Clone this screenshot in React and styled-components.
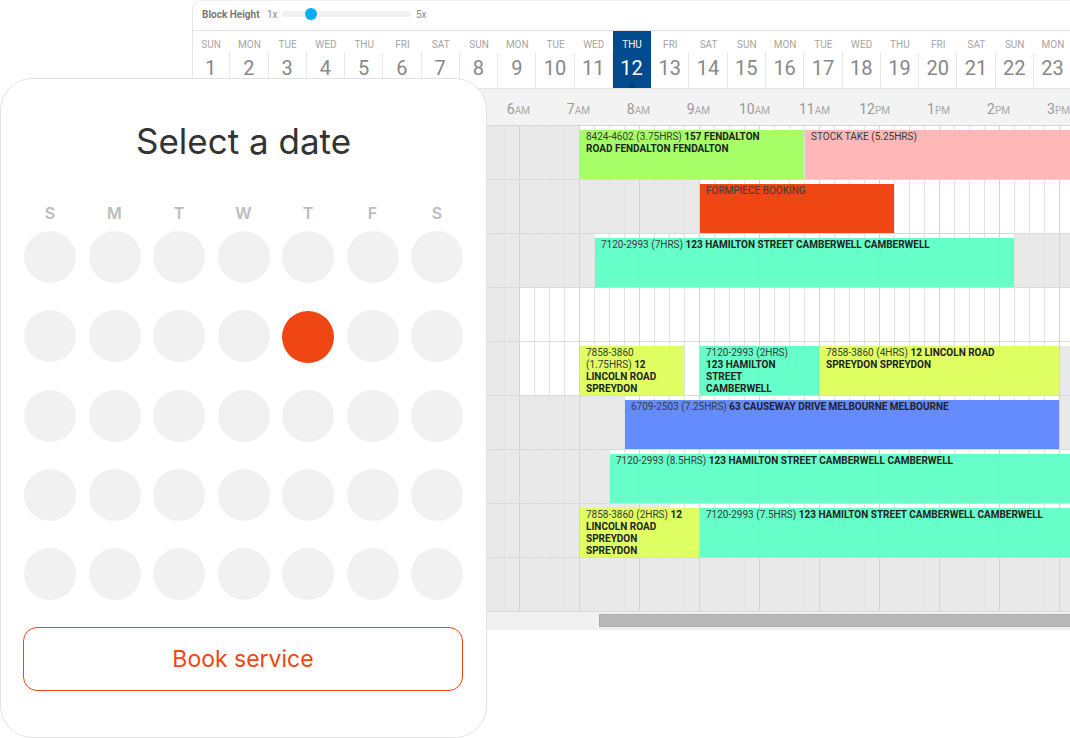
import React from 'react';
import styled, { createGlobalStyle } from 'styled-components';

const Global = createGlobalStyle`
  html, body { margin: 0; padding: 0; background: #fff; }
  body { width: 1070px; height: 738px; overflow: hidden; font-family: "Roboto", "Liberation Sans", sans-serif; }
  * { box-sizing: border-box; }
`;

const Stage = styled.div`
  position: relative;
  width: 1070px;
  height: 738px;
  overflow: hidden;
  padding-left: 192px;
`;

const Scheduler = styled.section`
  width: 900px;
  height: 630px;
  background: #fff;
  border: 2px solid #efefef;
  border-width: 1px 0 2px 1px;
  border-top-left-radius: 9px;
  border-left-color: #e6e6e6;
  overflow: hidden;
`;

const Toolbar = styled.div`
  height: 30px;
  display: flex;
  align-items: center;
  padding: 0 0 3px 9px;
  border-bottom: 1px solid #e4e4e4;
  font-size: 10px;
  color: #8d8784;
`;

const ToolbarLabel = styled.span`
  font-weight: 700;
  color: #7b7673;
  width: 65px;
`;

const Scale = styled.span`
  width: ${p => p.$w}px;
`;

const SliderTrack = styled.div`
  position: relative;
  width: 129px;
  height: 6px;
  margin: 0 5px 0 0;
  border-radius: 3px;
  background: #f1f1f1;
`;

const SliderThumb = styled.div`
  position: absolute;
  left: 23px;
  top: -3px;
  width: 12px;
  height: 12px;
  border-radius: 50%;
  background: #03aef4;
  box-shadow: 1px 1px 0 1px #f3f3f3;
`;

const DayStrip = styled.div`
  display: flex;
  height: 57px;
  margin-left: -1px;
`;

const Day = styled.div`
  position: relative;
  flex: 0 0 38.27px;
  display: flex;
  flex-direction: column;
  align-items: center;
  background: ${p => (p.$active ? '#004b8f' : 'transparent')};
  color: ${p => (p.$active ? '#fff' : '#888')};
`;

const DayName = styled.div`
  height: 21px;
  padding-top: 8px;
  font-size: 10px;
  line-height: 12px;
  color: ${p => (p.$active ? '#fff' : '#a8a4a2')};
`;

const DayNumber = styled.div`
  width: 100%;
  flex: 1;
  padding-top: 4px;
  text-align: center;
  font-size: 20px;
  line-height: 24px;
  border-right: 1px solid ${p => (p.$active ? 'transparent' : '#e8e8e8')};
`;

const Marker = styled.span`
  position: absolute;
  left: 50%;
  bottom: 0;
  margin-left: -4px;
  border: 4px solid transparent;
  border-top: 0;
  border-bottom: 5px solid #003a70;
`;

const TimeStrip = styled.div`
  display: flex;
  height: 38px;
  padding-left: 277px;
  background: #f3f3f3;
  border-top: 1px solid #e4e4e4;
  border-bottom: 1px solid #d6d6d6;
`;

const Hour = styled.div`
  flex: 0 0 60px;
  padding-top: 11px;
  text-align: right;
  font-size: 14px;
  line-height: 18px;
  color: #999;
`;

const Meridiem = styled.span`
  font-size: 10px;
  color: #aaa;
`;

const Row = styled.div`
  position: relative;
  height: 54px;
  overflow: hidden;
  background: #fff;
  border-bottom: 1px solid #dadada;
  &::after {
    content: '';
    position: absolute;
    inset: 0;
    z-index: 1;
    background:
      linear-gradient(90deg, #d4d4d4 1px, transparent 1px) 26px 0 / 60px 100%,
      linear-gradient(90deg, #e3e3e3 1px, transparent 1px) 11px 0 / 15px 100%;
  }
`;

const Closed = styled.div`
  position: absolute;
  top: ${p => (p.$inset ? 4 : 0)}px;
  bottom: 0;
  background: #e9e9e9;
`;

const Booking = styled.div`
  position: absolute;
  z-index: 2;
  top: 4px;
  bottom: 0;
  padding: 1px 17px 0 6px;
  overflow: hidden;
  font-size: 10px;
  line-height: 12px;
  color: #3a3a3a;
  text-transform: uppercase;
  background: ${p => p.$color};
  strong { font-weight: 700; color: #222; }
`;

const ScrollBar = styled.div`
  height: 16px;
  padding: 2px 0 2px 406px;
  background: #f1f1f1;
`;

const ScrollThumb = styled.div`
  height: 13px;
  background: #b9b9b9;
  border: 1px solid #a9a9a9;
`;

const Card = styled.div`
  position: absolute;
  z-index: 5;
  left: 0;
  top: 78px;
  width: 487px;
  height: 660px;
  padding: 0 23px;
  background: #fff;
  border: 1px solid #e3e3e3;
  border-radius: 32px;
  font-family: "Inter", "Liberation Sans", sans-serif;
  display: flex;
  flex-direction: column;
`;

const Title = styled.h1`
  margin: 40px 0 0;
  height: 44px;
  text-align: center;
  font-size: 35px;
  line-height: 44px;
  font-weight: 400;
  color: #333;
`;

const Weekdays = styled.div`
  display: grid;
  grid-template-columns: repeat(7, 52px);
  column-gap: 12.5px;
  margin-top: 40px;
  height: 24px;
`;

const Weekday = styled.div`
  text-align: center;
  font-size: 16px;
  line-height: 20px;
  font-weight: 600;
  color: #bcbcbc;
`;

const Dates = styled.div`
  display: grid;
  grid-template-columns: repeat(7, 52px);
  grid-auto-rows: 52px;
  column-gap: 12.5px;
  row-gap: 27.3px;
  margin-top: 4px;
`;

const Dot = styled.div`
  border-radius: 50%;
  background: ${p => (p.$active ? '#ef4613' : '#f1f1f1')};
  transform: ${p => (p.$active ? 'translateY(1px)' : 'none')};
`;

const BookButton = styled.button`
  margin: 27px 0 0 -1px;
  width: 440px;
  height: 64px;
  background: #fff;
  border: 1px solid #ef4613;
  border-radius: 14px;
  font-family: inherit;
  font-size: 23px;
  color: #ef4613;
`;

const C = { green: '#a2ff60f5', pink: '#ffb3b3f0', orange: '#ef4613', teal: '#5fffc6f2', yellow: '#dfff5cf5', blue: '#5e87fff5' };

const names = ['SUN', 'MON', 'TUE', 'WED', 'THU', 'FRI', 'SAT'];
const days = Array.from({ length: 23 }, (_, i) => ({ n: i + 1, name: names[i % 7] }));
const hours = [['6', 'AM'], ['7', 'AM'], ['8', 'AM'], ['9', 'AM'], ['10', 'AM'], ['11', 'AM'], ['12', 'PM'], ['1', 'PM'], ['2', 'PM'], ['3', 'PM']];

const rows = [
  { closedTo: 7, bookings: [
    { s: 7, h: 3.75, c: 'green', t: '8424-4602 (3.75HRS) ', b: '157 FENDALTON ROAD FENDALTON FENDALTON' },
    { s: 10.75, h: 5.25, c: 'pink', t: 'STOCK TAKE (5.25HRS)' },
  ] },
  { closedTo: 9, bookings: [{ s: 9, h: 3.25, c: 'orange', t: 'FORMPIECE BOOKING' }] },
  { closedTo: 7.25, closedFrom: 14.25, bookings: [
    { s: 7.25, h: 7, c: 'teal', t: '7120-2993 (7HRS) ', b: '123 HAMILTON STREET CAMBERWELL CAMBERWELL' },
  ] },
  { closedTo: 6, bookings: [] },
  { closedTo: 6, closedFrom: 15, inset: true, bookings: [
    { s: 7, h: 1.75, c: 'yellow', t: '7858-3860 (1.75HRS) ', b: '12 LINCOLN ROAD SPREYDON' },
    { s: 9, h: 2, c: 'teal', t: '7120-2993 (2HRS) ', b: '123 HAMILTON STREET CAMBERWELL' },
    { s: 11, h: 4, c: 'yellow', t: '7858-3860 (4HRS) ', b: '12 LINCOLN ROAD SPREYDON SPREYDON' },
  ] },
  { closedTo: 7.75, closedFrom: 15, bookings: [
    { s: 7.75, h: 7.25, c: 'blue', t: '6709-2503 (7.25HRS) ', b: '63 CAUSEWAY DRIVE MELBOURNE MELBOURNE' },
  ] },
  { closedTo: 7.5, bookings: [
    { s: 7.5, h: 8.5, c: 'teal', t: '7120-2993 (8.5HRS) ', b: '123 HAMILTON STREET CAMBERWELL CAMBERWELL' },
  ] },
  { closedTo: 8.5, bookings: [
    { s: 7, h: 2, c: 'yellow', t: '7858-3860 (2HRS) ', b: '12 LINCOLN ROAD SPREYDON SPREYDON' },
    { s: 9, h: 7.5, c: 'teal', t: '7120-2993 (7.5HRS) ', b: '123 HAMILTON STREET CAMBERWELL CAMBERWELL' },
  ] },
  { closedTo: 24, bookings: [] },
];

const hourX = h => 326 + (h - 6) * 60;

export default function App() {
  return (
    <Stage>
      <Global />
      <Scheduler>
        <Toolbar>
          <ToolbarLabel>Block Height</ToolbarLabel>
          <Scale $w={15}>1x</Scale>
          <SliderTrack><SliderThumb /></SliderTrack>
          <Scale $w={12}>5x</Scale>
        </Toolbar>
        <DayStrip>
          {days.map(d => {
            const active = d.n === 12;
            return (
              <Day key={d.n} $active={active}>
                <DayName $active={active}>{d.name}</DayName>
                <DayNumber $active={active}>{d.n}</DayNumber>
                {active && <Marker />}
              </Day>
            );
          })}
        </DayStrip>
        <TimeStrip>
          {hours.map(([n, m]) => (
            <Hour key={n}>{n}<Meridiem>{m}</Meridiem></Hour>
          ))}
        </TimeStrip>
        {rows.map((r, i) => (
          <Row key={i}>
            <Closed style={{ left: 0, width: Math.min(hourX(r.closedTo), 900) }} />
            {r.closedFrom && (
              <Closed $inset={r.inset} style={{ left: hourX(r.closedFrom) + 1, right: 0 }} />
            )}
            {r.bookings.map((b, j) => (
              <Booking
                key={j}
                $color={C[b.c]}
                style={{ left: hourX(b.s) + 1, width: b.h * 60 - 1 }}
              >
                {b.t}{b.b && <strong>{b.b}</strong>}
              </Booking>
            ))}
          </Row>
        ))}
        <ScrollBar><ScrollThumb /></ScrollBar>
      </Scheduler>
      <Card>
        <Title>Select a date</Title>
        <Weekdays>
          {['S', 'M', 'T', 'W', 'T', 'F', 'S'].map((d, i) => <Weekday key={i}>{d}</Weekday>)}
        </Weekdays>
        <Dates>
          {Array.from({ length: 35 }, (_, i) => <Dot key={i} $active={i === 11} />)}
        </Dates>
        <BookButton>Book service</BookButton>
      </Card>
    </Stage>
  );
}
